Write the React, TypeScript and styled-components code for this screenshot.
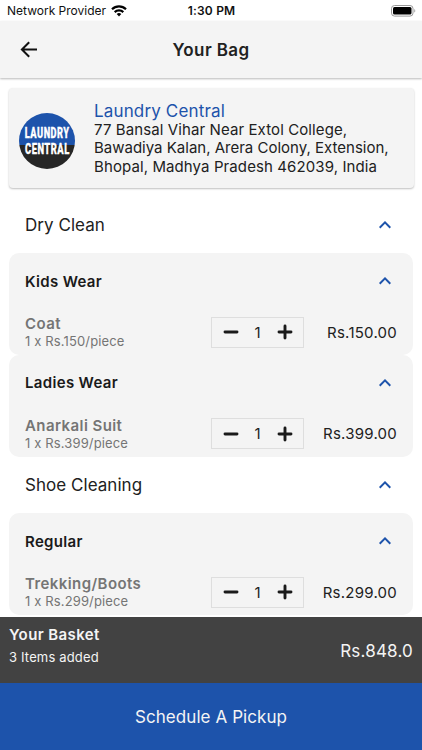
import React from "react";
import styled, { createGlobalStyle } from "styled-components";

const GlobalStyle = createGlobalStyle`
  * { box-sizing: border-box; }
  html, body { margin: 0; padding: 0; background: #fff; }
  body { font-family: Inter, "Liberation Sans", sans-serif; color: #212121; }
  button { font: inherit; color: inherit; border: 0; padding: 0; background: none; }
`;

const BLUE = "#1d53ab";

const Screen = styled.div`
  width: 422px;
  height: 750px;
  display: flex;
  flex-direction: column;
  overflow: hidden;
  white-space: nowrap;
`;

const StatusBar = styled.div`
  height: 21px;
  flex: none;
  display: grid;
  grid-template-columns: 1fr auto 1fr;
  align-items: center;
  padding: 0 6px 0 7px;
  color: #111;
  line-height: 21px;
`;

const Carrier = styled.div`
  display: flex;
  align-items: center;
  gap: 5px;
  font-size: 12px;
`;

const Clock = styled.div`
  font-size: 12px;
  font-weight: 600;
  letter-spacing: 0.2px;
`;

const BatterySlot = styled.div`
  display: flex;
  justify-content: flex-end;
`;

const Header = styled.header`
  height: 57px;
  flex: none;
  display: grid;
  grid-template-columns: 58px 1fr 58px;
  align-items: center;
  background: #f4f4f4;
  box-shadow: 0 1px 2px rgba(0, 0, 0, 0.28);
`;

const BackButton = styled.button`
  display: flex;
  justify-content: center;
`;

const Title = styled.h1`
  margin: 0;
  padding-top: 1px;
  font-size: 17px;
  font-weight: 600;
  line-height: 56px;
  letter-spacing: 0.4px;
  text-align: center;
`;

const Content = styled.main`
  flex: 1;
  min-height: 0;
  padding: 10px 8px 0;
  overflow: hidden;
`;

const StoreCard = styled.section`
  height: 100px;
  margin: 0 0.5px 8px;
  padding: 14px 10px 0;
  display: flex;
  gap: 19px;
  background: #f4f4f4;
  border-radius: 4px;
  box-shadow: 0 1px 2px rgba(0, 0, 0, 0.25);
`;

const Logo = styled.svg`
  flex: none;
  margin: 10.7px 0 0 0.5px;
`;

const StoreName = styled.div`
  color: ${BLUE};
  font-size: 17px;
  line-height: 19px;
  letter-spacing: 0.15px;
`;

const AddressLine = styled.div<{ $tight?: boolean }>`
  font-size: 15px;
  line-height: 18.4px;
  letter-spacing: ${(p) => (p.$tight ? 0 : 0.1)}px;
`;

const Service = styled.section`
  margin-bottom: -0.5px;
`;

const ExpandRow = styled.button<{ $inner?: boolean }>`
  width: 100%;
  height: ${(p) => (p.$inner ? 56 : 57)}px;
  display: flex;
  align-items: center;
  justify-content: space-between;
  padding: 0 ${(p) => (p.$inner ? 22 : 23)}px 0 ${(p) => (p.$inner ? 16 : 17)}px;
  text-align: left;
  color: ${(p) => (p.$inner ? "#1a1a1a" : "#212121")};
  font-size: ${(p) => (p.$inner ? 15 : 17)}px;
  font-weight: ${(p) => (p.$inner ? 600 : 400)};
  letter-spacing: ${(p) => (p.$inner ? 0.33 : 0.04)}px;
`;

const Group = styled.section`
  height: 101.9px;
  margin: 0 1px;
  background: #f4f4f4;
  border-radius: 10px;
`;

const ItemRow = styled.div`
  height: 46px;
  display: grid;
  grid-template-columns: 1fr 93px 93px;
  align-items: center;
  padding: 0 16px;
`;

const ItemName = styled.div`
  color: #757575;
  font-size: 15px;
  font-weight: 600;
  line-height: 18px;
  letter-spacing: 0.42px;
`;

const ItemRate = styled.div`
  color: #757575;
  font-size: 13px;
  line-height: 16px;
  letter-spacing: 0.14px;
`;

const Stepper = styled.div`
  height: 31px;
  display: grid;
  grid-template-columns: 37px 17px 37px;
  align-items: center;
  border: 1px solid #dedede;
`;

const StepButton = styled.button`
  display: flex;
  justify-content: center;
`;

const Quantity = styled.span`
  font-size: 15px;
  text-align: center;
`;

const Price = styled.div`
  font-size: 15px;
  text-align: right;
  letter-spacing: 0.24px;
`;

const Basket = styled.section`
  height: 66px;
  flex: none;
  display: flex;
  justify-content: space-between;
  align-items: center;
  padding: 0 9px;
  color: #f4f4f4;
  background: #424242;
`;

const BasketTitle = styled.div`
  height: 32px;
  font-size: 15px;
  font-weight: 600;
  line-height: 34px;
  letter-spacing: 0.4px;
`;

const BasketCount = styled.div`
  height: 32px;
  font-size: 13px;
  line-height: 14px;
  letter-spacing: 0.16px;
`;

const BasketTotal = styled.div`
  padding-top: 1px;
  font-size: 17px;
  letter-spacing: 0.2px;
`;

const PickupButton = styled.button`
  height: 67px;
  flex: none;
  color: #f4f4f4;
  background: ${BLUE};
  font-size: 17px;
  letter-spacing: 0.08px;
`;

const WifiIcon = () => (
  <svg width="16" height="12" viewBox="0 0 16 12" fill="none" stroke="#000" strokeWidth="2.2">
    <path d="M1 4.3a10 10 0 0 1 14 0" />
    <path d="M3.7 7.1a6.1 6.1 0 0 1 8.6 0" />
    <path d="M8 11.4 5.7 9.1a3.3 3.3 0 0 1 4.6 0z" fill="#000" stroke="none" />
  </svg>
);

const BatteryIcon = () => (
  <svg width="25" height="12" viewBox="0 0 25 12">
    <rect x="0.5" y="0.5" width="21.5" height="10.6" rx="3" fill="#fff" stroke="#999" />
    <rect x="2" y="2" width="18.5" height="7.6" rx="1.5" fill="#000" />
    <path d="M23.3 4v3.6c1.3-.5 1.3-3.1 0-3.6z" fill="#999" />
  </svg>
);

const BackIcon = () => (
  <svg width="18" height="18" viewBox="0 0 18 18" fill="none" stroke="#111" strokeWidth="2">
    <path d="M17 8.5H2.2M9.2 1.2 1.9 8.5l7.3 7.3" />
  </svg>
);

const ChevronUp = () => (
  <svg width="12" height="8" viewBox="0 0 12 8" fill="none" stroke={BLUE} strokeWidth="2">
    <path d="M.7 6.7 6 1.4 11.3 6.7" />
  </svg>
);

const StepIcon = ({ plus }: { plus?: boolean }) => (
  <svg width="16" height="16" viewBox="0 0 16 16" stroke="#1a1a1a" strokeWidth="2.9" strokeLinecap="round">
    <path d={plus ? "M2 8h12M8 2v12" : "M2 8h12"} />
  </svg>
);

const LaundryLogo = () => (
  <Logo width="56" height="56" viewBox="0 0 56 56">
    <clipPath id="disc">
      <circle cx="28" cy="28" r="28" />
    </clipPath>
    <g clipPath="url(#disc)">
      <rect width="56" height="32" fill={BLUE} />
      <rect y="32" width="56" height="24" fill="#262626" />
    </g>
    <g
      fill="#fff"
      stroke="#fff"
      strokeWidth="0.3"
      fontFamily="Roboto, sans-serif"
      fontWeight="900"
      fontSize="15"
      letterSpacing="0.8"
      textAnchor="middle"
    >
      <text transform="translate(28.2 25.4) scale(0.615 1)">LAUNDRY</text>
      <text transform="translate(28.4 40.8) scale(0.625 1)">CENTRAL</text>
    </g>
  </Logo>
);

const services = [
  {
    name: "Dry Clean",
    groups: [
      { name: "Kids Wear", item: "Coat", rate: "1 x Rs.150/piece", price: "Rs.150.00" },
      { name: "Ladies Wear", item: "Anarkali Suit", rate: "1 x Rs.399/piece", price: "Rs.399.00" },
    ],
  },
  {
    name: "Shoe Cleaning",
    groups: [{ name: "Regular", item: "Trekking/Boots", rate: "1 x Rs.299/piece", price: "Rs.299.00" }],
  },
];

export default function App() {
  return (
    <Screen>
      <GlobalStyle />
      <StatusBar>
        <Carrier>
          Network Provider <WifiIcon />
        </Carrier>
        <Clock>1:30 PM</Clock>
        <BatterySlot>
          <BatteryIcon />
        </BatterySlot>
      </StatusBar>
      <Header>
        <BackButton aria-label="Back">
          <BackIcon />
        </BackButton>
        <Title>Your Bag</Title>
      </Header>
      <Content>
        <StoreCard>
          <LaundryLogo />
          <div>
            <StoreName>Laundry Central</StoreName>
            <AddressLine>77 Bansal Vihar Near Extol College,</AddressLine>
            <AddressLine $tight>Bawadiya Kalan, Arera Colony, Extension,</AddressLine>
            <AddressLine>Bhopal, Madhya Pradesh 462039, India</AddressLine>
          </div>
        </StoreCard>
        {services.map((service) => (
          <Service key={service.name}>
            <ExpandRow>
              {service.name}
              <ChevronUp />
            </ExpandRow>
            {service.groups.map((group) => (
              <Group key={group.name}>
                <ExpandRow $inner>
                  {group.name}
                  <ChevronUp />
                </ExpandRow>
                <ItemRow>
                  <div>
                    <ItemName>{group.item}</ItemName>
                    <ItemRate>{group.rate}</ItemRate>
                  </div>
                  <Stepper>
                    <StepButton aria-label="Remove one">
                      <StepIcon />
                    </StepButton>
                    <Quantity>1</Quantity>
                    <StepButton aria-label="Add one">
                      <StepIcon plus />
                    </StepButton>
                  </Stepper>
                  <Price>{group.price}</Price>
                </ItemRow>
              </Group>
            ))}
          </Service>
        ))}
      </Content>
      <Basket>
        <div>
          <BasketTitle>Your Basket</BasketTitle>
          <BasketCount>3 Items added</BasketCount>
        </div>
        <BasketTotal>Rs.848.0</BasketTotal>
      </Basket>
      <PickupButton>Schedule A Pickup</PickupButton>
    </Screen>
  );
}
